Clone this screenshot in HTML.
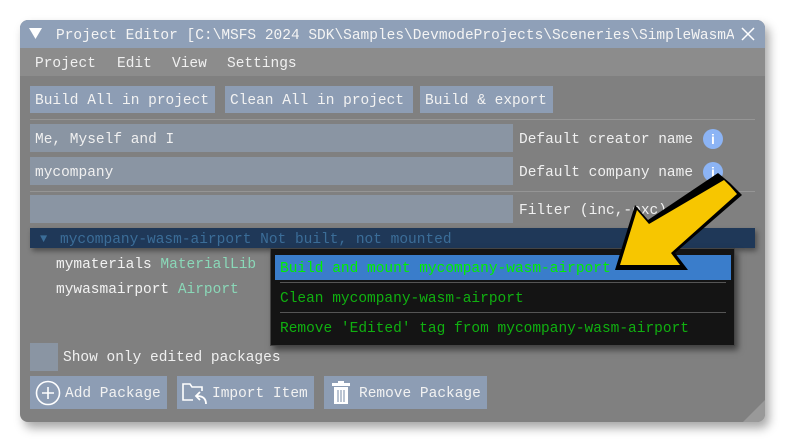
<!DOCTYPE html>
<html><head><style>
body{margin:0;width:785px;height:444px;background:#fff;position:relative;overflow:hidden;font-family:"Liberation Mono",monospace;font-size:14.5px;}
.a{position:absolute;white-space:pre;}
.win{position:absolute;left:20px;top:20px;width:745px;height:402px;background:#808080;border-radius:8px;box-shadow:4px 6px 10px rgba(0,0,0,.35);overflow:hidden;}
.btn{position:absolute;background:#8d9db4;color:#f2f2f2;line-height:31px;padding-left:5px;box-sizing:border-box;}
.inp{position:absolute;background:#8a95a3;color:#f0f0f0;line-height:32px;padding-left:5px;box-sizing:border-box;}
.lbl{color:#f0f0f0;}
.sep{position:absolute;height:1px;background:#959595;}
.info{position:absolute;width:20px;height:20px;border-radius:50%;background:#8cb4f5;color:#fff;text-align:center;line-height:20px;font-weight:bold;font-family:"Liberation Sans",sans-serif;font-size:14px;}
</style></head><body>
<div class="win">
 <div style="position:absolute;left:0;top:0;width:745px;height:28px;background:#8fa0b8;"></div>
 <div style="position:absolute;left:0;top:28px;width:745px;height:28px;background:#8c8c8c;"></div>
 <div style="position:absolute;right:0;bottom:0;width:0;height:0;border-left:22px solid transparent;border-bottom:22px solid #999;"></div>
</div>
<svg class="a" style="left:29px;top:28px" width="14" height="12"><polygon points="0,0 13,0 6.5,11" fill="#fff"/></svg>
<div class="a" style="left:56px;top:26px;line-height:20px;color:#f4f4f4;width:678px;overflow:hidden">Project Editor [C:\MSFS 2024 SDK\Samples\DevmodeProjects\Sceneries\SimpleWasmAirport</div>
<svg class="a" style="left:741px;top:27px" width="14" height="14"><path d="M1 1L13 13M13 1L1 13" stroke="#fff" stroke-width="1.5"/></svg>
<div class="a lbl" style="left:35px;top:54px;line-height:20px">Project</div>
<div class="a lbl" style="left:117px;top:54px;line-height:20px">Edit</div>
<div class="a lbl" style="left:172px;top:54px;line-height:20px">View</div>
<div class="a lbl" style="left:227px;top:54px;line-height:20px">Settings</div>
<div class="btn" style="left:30px;top:86px;width:185px;height:27px">Build All in project</div>
<div class="btn" style="left:225px;top:86px;width:188px;height:27px">Clean All in project</div>
<div class="btn" style="left:420px;top:86px;width:133px;height:27px">Build &amp; export</div>
<div class="sep" style="left:30px;top:119px;width:725px"></div>
<div class="inp" style="left:30px;top:124px;width:483px;height:28px">Me, Myself and I</div>
<div class="a lbl" style="left:519px;top:130px;line-height:20px">Default creator name</div>
<div class="info" style="left:703px;top:129px">i</div>
<div class="inp" style="left:30px;top:157px;width:483px;height:28px">mycompany</div>
<div class="a lbl" style="left:519px;top:163px;line-height:20px">Default company name</div>
<div class="info" style="left:703px;top:162px">i</div>
<div class="sep" style="left:30px;top:191px;width:725px"></div>
<div class="inp" style="left:30px;top:195px;width:483px;height:28px"></div>
<div class="a lbl" style="left:519px;top:201px;line-height:20px">Filter (inc,-exc)</div>
<div class="a" style="left:30px;top:228px;width:725px;height:20px;background:#1f3858;box-shadow:2px 3px 5px rgba(0,0,0,.4)"></div>
<div class="a" style="left:40px;top:229px;line-height:20px;color:#3b6d98;font-size:12px">▼</div>
<div class="a" style="left:60px;top:230px;line-height:20px;color:#3b6d98">mycompany-wasm-airport Not built, not mounted</div>
<div class="a" style="left:56px;top:255px;line-height:20px;color:#f2f2f2">mymaterials <span style="color:#8ad8b8">MaterialLib</span></div>
<div class="a" style="left:56px;top:280px;line-height:20px;color:#f2f2f2">mywasmairport <span style="color:#8ad8b8">Airport</span></div>
<div class="a" style="left:270px;top:248px;width:465px;height:98px;background:#141414;border:1px solid #444;box-sizing:border-box;box-shadow:3px 4px 6px rgba(0,0,0,.5)"></div>
<div class="a" style="left:275px;top:255px;width:456px;height:25px;background:#3a7dcb"></div>
<div class="a" style="left:280px;top:259px;line-height:20px;color:#00f000">Build and mount mycompany-wasm-airport</div>
<div class="a" style="left:280px;top:282px;width:446px;height:1px;background:#555"></div>
<div class="a" style="left:280px;top:289px;line-height:20px;color:#10b010">Clean mycompany-wasm-airport</div>
<div class="a" style="left:280px;top:312px;width:446px;height:1px;background:#555"></div>
<div class="a" style="left:280px;top:319px;line-height:20px;color:#10b010">Remove 'Edited' tag from mycompany-wasm-airport</div>
<div class="a" style="left:30px;top:343px;width:28px;height:28px;background:#8a95a3"></div>
<div class="a lbl" style="left:63px;top:348px;line-height:20px">Show only edited packages</div>
<div class="btn" style="left:30px;top:376px;width:137px;height:33px;line-height:36px;padding-left:35px">Add Package</div>
<svg class="a" style="left:35px;top:380px" width="26" height="26"><circle cx="13" cy="13" r="11.5" fill="none" stroke="#fff" stroke-width="1.6"/><path d="M13 7V19M7 13H19" stroke="#fff" stroke-width="1.6"/></svg>
<div class="btn" style="left:177px;top:376px;width:137px;height:33px;line-height:36px;padding-left:35px">Import Item</div>
<svg class="a" style="left:181px;top:380px" width="28" height="26"><path d="M12 20H2V4H9L11 7H21V11" fill="none" stroke="#fff" stroke-width="1.6"/><path d="M25 24C25 18 21 16 16 16M19 12L15 16L19 20" fill="none" stroke="#fff" stroke-width="1.8"/></svg>
<div class="btn" style="left:324px;top:376px;width:163px;height:33px;line-height:36px;padding-left:35px">Remove Package</div>
<svg class="a" style="left:331px;top:381px" width="20" height="24"><rect x="3" y="6" width="14" height="17" fill="#fff"/><rect x="1" y="2" width="18" height="3" fill="#fff"/><rect x="7" y="0" width="6" height="3" fill="#fff"/><path d="M7 9V21M10 9V21M13 9V21" stroke="#8d9db4" stroke-width="1.2"/></svg>
<svg class="a" style="left:600px;top:170px" width="150" height="110"><polygon points="130,8 142,20 75,78 88,95 15,95 35,30 48,45 118,-2" transform="translate(0,5)" fill="#000"/><polygon points="130,12 137,20 71,79 80,91 20,91 37,36 49,50 124,6" transform="translate(0,4)" fill="#f7c600"/></svg>
</body></html>
